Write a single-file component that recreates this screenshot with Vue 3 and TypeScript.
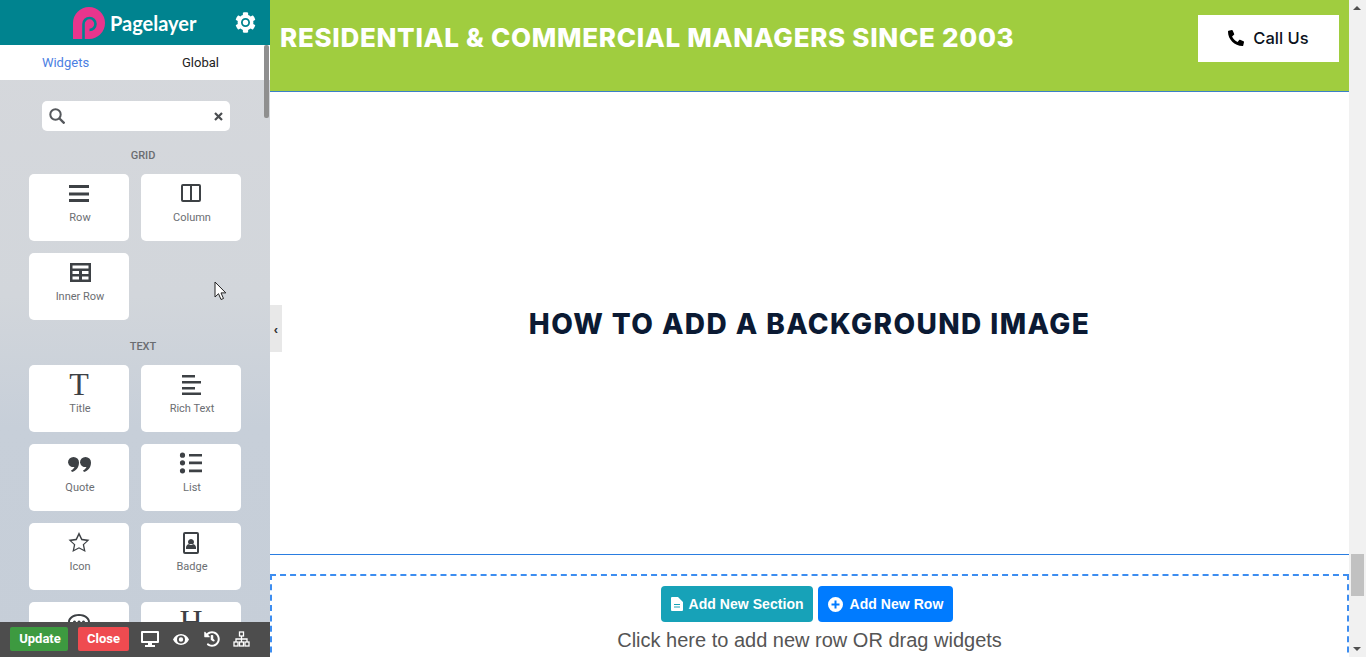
<script setup lang="ts">
interface Widget { id: string; label?: string; d?: string; glyph?: string }
interface Group { title: string; items: Widget[] }

const groups: Group[] = [
  {
    title: 'GRID',
    items: [
      { id: 'row', label: 'Row', d: 'M2 3h20v3H2z M2 10.5h20v3H2z M2 17h20v3H2z' },
      { id: 'col', label: 'Column', d: 'M4 2h16a2 2 0 0 1 2 2v14a2 2 0 0 1-2 2H4a2 2 0 0 1-2-2V4a2 2 0 0 1 2-2z M4 4v14h7V4z M13 4v14h7V4z' },
      { id: 'inner', label: 'Inner Row', d: 'M3 2h21v19H3z M5.500 4.500h16v3h-16z M5.500 10h6.500v3h-6.500z M15 10h6.500v3H15z M5.500 15.500h6.500v3h-6.500z M15 15.500h6.500v3H15z' }
    ]
  },
  {
    title: 'TEXT',
    items: [
      { id: 'title', label: 'Title', glyph: 'T' },
      { id: 'rich', label: 'Rich Text', d: 'M3 2h13v2.5H3z M3 8h19v2.5H3z M3 14h13v2.5H3z M3 19.5h19V22H3z' },
      { id: 'quote', label: 'Quote', d: 'M1 10.5a5.5 5.5 0 1 1 11 0c0 5-3 8.5-7 9.5l-1-1.5c2-1 3-2.5 3.5-3.5a5.5 5.5 0 0 1-6.5-4.5z M13 10.5a5.5 5.5 0 1 1 11 0c0 5-3 8.5-7 9.5l-1-1.5c2-1 3-2.5 3.5-3.5a5.5 5.5 0 0 1-6.5-4.5z' },
      { id: 'list', label: 'List', d: 'M3.5 0.6a2.6 2.6 0 1 1 0 5.2 2.6 2.6 0 0 1 0-5.2z M3.5 8.2a2.6 2.6 0 1 1 0 5.2 2.6 2.6 0 0 1 0-5.2z M3.5 16.2a2.6 2.6 0 1 1 0 5.2 2.6 2.6 0 0 1 0-5.2z M10 2h13v2.6H10z M10 9.6h13v2.6H10z M10 17.6h13v2.6H10z' },
      { id: 'icon', label: 'Icon', d: 'M12 1l3.2 6.8 7.3.9-5.4 5 1.5 7.3-6.6-3.6-6.6 3.6 1.5-7.3-5.4-5 7.3-.9z M12 4.4l2.3 4.9 5.3.65-3.9 3.6 1.1 5.3-4.8-2.6-4.8 2.6 1.1-5.3-3.9-3.6 5.3-.65z' },
      { id: 'badge', label: 'Badge', d: 'M6 1h12a2 2 0 0 1 2 2v18a2 2 0 0 1-2 2H6a2 2 0 0 1-2-2V3a2 2 0 0 1 2-2z M6 3v18h12V3z M12 8a3 3 0 1 0 .01 0z M7 18v-1.5c0-2 2-3.5 3-3.5h4c1 0 3 1.5 3 3.5V18z' },
      { id: 'bubble', d: 'M12 4c6 0 11 3.4 11 8s-5 8-11 8c-1.6 0-3-.2-4.4-.7L3 21l1.2-4C2.200 15.500 1 13.900 1 12c0-4.600 5-8 11-8z M12 6c-5 0-9 2.700-9 6s4 6 9 6 9-2.700 9-6-4-6-9-6z M7.500 10.500a1.500 1.500 0 1 0 .01 0z M12 10.500a1.500 1.500 0 1 0 .01 0z M16.500 10.500a1.500 1.500 0 1 0 .01 0z' },
      { id: 'heading', glyph: 'H' }
    ]
  }
]

const cog = 'M487.4 315.7l-42.6-24.6c4.3-23.2 4.3-47 0-70.2l42.6-24.6c4.900-2.800 7.100-8.600 5.500-14-11.100-35.600-30-67.800-54.700-94.600-3.800-4.100-10-5.100-14.800-2.300L380.800 110c-17.900-15.400-38.500-27.300-60.800-35.100V25.800c0-5.600-3.900-10.500-9.400-11.700-36.700-8.200-74.300-7.800-109.200 0-5.500 1.200-9.400 6.100-9.400 11.700V75c-22.200 7.900-42.800 19.800-60.800 35.100L88.700 85.500c-4.900-2.800-11-1.900-14.800 2.300-24.700 26.700-43.600 58.900-54.700 94.600-1.700 5.400.6 11.200 5.500 14L67.300 221c-4.300 23.200-4.300 47 0 70.200l-42.600 24.600c-4.900 2.800-7.100 8.600-5.500 14 11.100 35.600 30 67.800 54.700 94.600 3.800 4.100 10 5.100 14.800 2.300l42.600-24.600c17.900 15.400 38.500 27.300 60.800 35.100v49.200c0 5.600 3.900 10.500 9.400 11.700 36.700 8.200 74.300 7.800 109.200 0 5.500-1.200 9.400-6.100 9.400-11.700v-49.200c22.200-7.900 42.800-19.800 60.800-35.100l42.600 24.600c4.900 2.800 11 1.900 14.800-2.300 24.700-26.700 43.600-58.900 54.700-94.600 1.500-5.500-.7-11.300-5.600-14.100zM256 366c-60.800 0-110-49.200-110-110s49.200-110 110-110 110 49.200 110 110-49.200 110-110 110z'
const phone = 'M493.4 24.6l-104-24c-11.3-2.600-22.900 3.300-27.500 13.900l-48 112c-4.200 9.800-1.400 21.300 6.900 28l60.600 49.600c-36 76.700-98.900 140.500-177.200 177.200l-49.600-60.600c-6.800-8.300-18.200-11.100-28-6.900l-112 48C3.900 366.500-2 378.100.6 389.400l24 104C27.100 504.200 36.700 512 48 512c256.100 0 464-207.500 464-464 0-11.200-7.700-20.900-18.600-23.400z'
const history = 'M504 255.531c.253 136.64-111.18 248.372-247.82 248.468-59.015.042-113.223-20.53-155.822-54.911-11.077-8.94-11.905-25.541-1.839-35.607l11.267-11.267c8.609-8.609 22.353-9.551 31.891-1.984C173.062 425.135 212.781 440 256 440c101.705 0 184-82.311 184-184 0-101.705-82.311-184-184-184-48.814 0-93.149 18.969-126.068 49.932l50.754 50.754c10.08 10.08 2.941 27.314-11.313 27.314H24c-8.837 0-16-7.163-16-16V38.627c0-14.254 17.234-21.393 27.314-11.314l49.372 49.372C129.209 34.136 189.552 8 256 8c136.81 0 247.747 110.78 248 247.531zM323.088 334.315l16.662-21.367c6.52-8.354 5.03-20.433-3.324-26.949L296 250.562V152c0-13.255-10.745-24-24-24h-32c-13.255 0-24 10.745-24 24v128.438l65.138 50.684c8.354 6.518 20.43 5.031 26.95-3.807z'
</script>

<template>
  <div class="page">
    <aside class="sidebar">
      <header class="brand">
        <svg class="logo" viewBox="0 0 32 32" width="32" height="32">
          <path fill="#e8358d" d="M0 32V16A16 16 0 1 1 16 32h-4V32z" />
          <path fill="none" stroke="#00838f" stroke-width="2.6" d="M10.500 32V17a6 6 0 1 1 6 6" />
          <circle cx="16.500" cy="17" r="3" fill="#e8358d" />
        </svg>
        <span class="brand-name">Pagelayer</span>
        <svg class="gear" viewBox="0 0 512 512" width="21" height="21">
          <path fill="#fff" :d="cog" />
          <circle cx="256" cy="256" r="66" fill="#fff" />
        </svg>
      </header>
      <nav class="tabs">
        <span class="tab active">Widgets</span>
        <span class="tab">Global</span>
      </nav>
      <div class="search">
        <svg viewBox="0 0 16 16" width="16" height="16" class="search-icon">
          <circle cx="6.500" cy="6.500" r="5.200" fill="none" stroke="#55585c" stroke-width="2" />
          <path d="M10.500 10.500L15.500 15.500" stroke="#55585c" stroke-width="2.400" />
        </svg>
        <svg viewBox="0 0 9 9" width="9" height="9">
          <path d="M1 1L8 8M8 1L1 8" stroke="#4a4d50" stroke-width="2.200" />
        </svg>
      </div>
      <section v-for="group in groups" :key="group.title" class="group">
        <h3 class="group-title">{{ group.title }}</h3>
        <div class="cards">
          <div v-for="w in group.items" :key="w.id" class="card">
            <span v-if="w.glyph" class="glyph">{{ w.glyph }}</span>
            <svg v-else viewBox="0 0 24 24" width="24" height="24" class="card-icon">
              <path fill="#3d4145" fill-rule="evenodd" :d="w.d" />
            </svg>
            <span v-if="w.label" class="card-label">{{ w.label }}</span>
          </div>
        </div>
      </section>
      <div class="side-thumb"></div>
      <footer class="toolbar">
        <button class="tool-btn update">Update</button>
        <button class="tool-btn close">Close</button>
        <svg class="t-monitor" viewBox="0 0 18 16" width="18" height="16">
          <path fill="#fff" fill-rule="evenodd" d="M1 0h16a1 1 0 0 1 1 1v10a1 1 0 0 1-1 1h-6v2h3v2H4v-2h3v-2H1a1 1 0 0 1-1-1V1a1 1 0 0 1 1-1z M2 2v8h14V2z" />
        </svg>
        <svg class="t-eye" viewBox="0 0 16 11" width="16" height="11">
          <path fill="#fff" fill-rule="evenodd" d="M8 0c3.500 0 6.500 2.200 8 5.500C14.500 8.800 11.500 11 8 11S1.500 8.800 0 5.500C1.500 2.200 4.500 0 8 0z M8 1.500a4 4 0 1 0 0 8 4 4 0 0 0 0-8z M8 3.300a2.200 2.200 0 1 0 0 4.400 2.200 2.200 0 0 0 0-4.400z" />
        </svg>
        <svg class="t-history" viewBox="0 0 512 512" width="16" height="16">
          <path fill="#fff" :d="history" />
        </svg>
        <svg class="t-map" viewBox="0 0 17 16" width="17" height="16">
          <g fill="none" stroke="#fff" stroke-width="1.300">
            <rect x="6.500" y="1" width="4" height="4" />
            <rect x="1" y="11" width="4" height="4" />
            <rect x="6.500" y="11" width="4" height="4" />
            <rect x="12" y="11" width="4" height="4" />
            <path d="M8.500 5v6M3 11V8h11v3" />
          </g>
        </svg>
      </footer>
    </aside>

    <main class="content">
      <div class="topbar">
        <h1 class="headline">RESIDENTIAL &amp; COMMERCIAL MANAGERS SINCE 2003</h1>
        <a class="call">
          <svg viewBox="0 0 512 512" width="16" height="16" class="phone">
            <path fill="#000" transform="matrix(-1 0 0 1 512 0)" :d="phone" />
          </svg>
          Call Us
        </a>
      </div>
      <div class="hero">
        <h2 class="hero-title">HOW TO ADD A BACKGROUND IMAGE</h2>
      </div>
      <div class="spacer"></div>
      <div class="dropzone">
        <div class="actions">
          <button class="action section">
            <svg viewBox="0 0 12 14" width="12" height="14">
              <path fill="#fff" fill-rule="evenodd" d="M0 1a1 1 0 0 1 1-1h6l5 5v8a1 1 0 0 1-1 1H1a1 1 0 0 1-1-1z M3 7v1h6V7z M3 9.500v1h6v-1z" />
            </svg>
            Add New Section
          </button>
          <button class="action row">
            <svg viewBox="0 0 15 15" width="15" height="15">
              <path fill="#fff" fill-rule="evenodd" d="M7.500 0a7.500 7.500 0 1 1 0 15 7.500 7.500 0 0 1 0-15z M6.500 3.500v3h-3v2h3v3h2v-3h3v-2h-3v-3z" />
            </svg>
            Add New Row
          </button>
        </div>
        <p class="hint">Click here to add new row OR drag widgets</p>
      </div>
    </main>

    <div class="scrollbar">
      <span class="arrow up"></span>
      <span class="thumb"></span>
      <span class="arrow down"></span>
    </div>

    <div class="collapse">‹</div>
    <svg class="cursor" viewBox="0 0 13 20" width="13" height="20">
      <path fill="#fff" stroke="#222" stroke-width="1" d="M1 1v15l3.500-3.300 2.500 5.800 2.500-1-2.500-5.600h4.800z" />
    </svg>
  </div>
</template>

<style>
html, body { margin: 0; overflow: hidden; background: #fff; }
</style>

<style scoped>
.page {
  position: relative;
  display: flex;
  width: 1366px;
  height: 657px;
  overflow: hidden;
  font-family: Roboto, "Liberation Sans", sans-serif;
}
.sidebar {
  position: relative;
  flex: 0 0 270px;
  height: 657px;
  overflow: hidden;
  background: linear-gradient(180deg, #d6d8dc 0%, #d2d6db 45%, #c7cfd9 65%, #c6ced8 100%);
}
.brand {
  display: flex;
  align-items: center;
  height: 45px;
  padding-left: 73px;
  background: #00838f;
}
.brand-name {
  margin-left: 5px;
  width: 88px;
  font-family: Lato, Roboto, sans-serif;
  font-size: 20px;
  font-weight: 700;
  color: #fff;
  white-space: nowrap;
}
.gear { margin-left: 37px; }
.tabs {
  display: flex;
  height: 35px;
  background: #fff;
  font-size: 13px;
  line-height: 35px;
  color: #222;
}
.tab {
  flex: 1;
  padding-right: 4px;
  text-align: center;
}
.active { color: #4b80e2; }
.search {
  display: flex;
  align-items: center;
  justify-content: space-between;
  box-sizing: border-box;
  width: 188px;
  height: 30px;
  margin: 21px 0 0 42px;
  padding: 0 7px;
  border-radius: 5px;
  background: #fff;
}
.group-title {
  width: 286px;
  height: 20px;
  margin: 15px 0 8px;
  font-size: 11px;
  font-weight: 500;
  line-height: 20px;
  text-align: center;
  color: #6a6c70;
}
.group + .group .group-title { margin-top: 17px; }
.cards {
  display: grid;
  grid-template-columns: 100px 100px;
  gap: 12px;
  padding-left: 29px;
}
.card {
  display: flex;
  flex-direction: column;
  align-items: center;
  box-sizing: border-box;
  height: 67px;
  padding-top: 8px;
  border-radius: 5px;
  background: #fff;
}
.card-icon { display: block; }
.glyph {
  display: block;
  height: 24px;
  margin-top: -1px;
  margin-bottom: 1px;
  font-family: "Liberation Serif", serif;
  font-size: 32px;
  line-height: 24px;
  color: #3d4145;
}
.card-label {
  margin-top: 4px;
  padding-left: 2px;
  font-size: 11px;
  line-height: 16px;
  color: #6b6e72;
}
.side-thumb {
  position: absolute;
  top: 45px;
  right: 1px;
  width: 5px;
  height: 73px;
  border-radius: 2px;
  background: #8f8f8f;
}
.toolbar {
  position: absolute;
  left: 0;
  right: 0;
  bottom: 0;
  display: flex;
  align-items: center;
  box-sizing: border-box;
  height: 35px;
  padding: 0 0 1px 10px;
  background: #4d4d4d;
}
.tool-btn {
  height: 24px;
  padding: 0 0 1px;
  border: 0;
  border-radius: 2px;
  font-family: Roboto, sans-serif;
  font-size: 13px;
  font-weight: 700;
  color: #fff;
}
.update { width: 58px; padding-left: 2px; background: #3d9a40; }
.close { width: 51px; margin-left: 10px; background: #ef4b50; }
.t-monitor { margin-left: 12px; }
.t-eye { margin-left: 14px; }
.t-history { margin-left: 15px; }
.t-map { margin-left: 13px; }

.content {
  display: flex;
  flex-direction: column;
  flex: 0 0 1079px;
  height: 657px;
  overflow: hidden;
  background: #fff;
}
.topbar {
  display: flex;
  flex: none;
  align-items: flex-start;
  justify-content: space-between;
  box-sizing: border-box;
  height: 92px;
  padding: 15px 10px 0;
  background: #a0cd3f;
  border-bottom: 1px solid #3a80c8;
}
.headline {
  margin: 0;
  font-family: Inter, "Open Sans", sans-serif;
  font-size: 26px;
  font-weight: 800;
  letter-spacing: 0.7px;
  line-height: 46px;
  color: #fff;
  white-space: nowrap;
}
.call {
  display: flex;
  align-items: center;
  justify-content: center;
  gap: 9px;
  width: 141px;
  height: 45px;
  padding-bottom: 2px;
  background: #fff;
  font-family: Inter, sans-serif;
  font-size: 16.500px;
  font-weight: 500;
  color: #0b1220;
}
.hero {
  display: flex;
  flex: none;
  align-items: center;
  justify-content: center;
  height: 462px;
  border-bottom: 1px solid #2a7de1;
}
.hero-title {
  margin: 2px 0 0;
  font-family: Inter, "Open Sans", sans-serif;
  font-size: 28px;
  font-weight: 800;
  letter-spacing: 1.41px;
  color: #0b1a33;
  white-space: nowrap;
}
.spacer { flex: 0 0 19px; }
.dropzone {
  flex: 0 0 120px;
  box-sizing: border-box;
  padding-top: 10px;
  border: 2px dashed #3d8df0;
  text-align: center;
}
.actions {
  display: flex;
  justify-content: center;
  gap: 5px;
  padding-right: 6px;
}
.action {
  display: flex;
  align-items: center;
  gap: 6px;
  height: 36px;
  padding: 0 0 0 10px;
  border: 0;
  border-radius: 4px;
  font-family: "Liberation Sans", sans-serif;
  font-size: 14px;
  font-weight: 700;
  letter-spacing: 0.05px;
  color: #fff;
}
.section { width: 152px; background: #17a2b8; }
.row { width: 135px; gap: 7px; background: #007bff; }
.hint {
  margin: 6px 0 0;
  font-family: "Liberation Sans", sans-serif;
  font-size: 20px;
  line-height: 24px;
  color: #555;
}
.scrollbar {
  position: relative;
  flex: 0 0 17px;
  height: 657px;
  background: #f1f1f1;
}
.arrow {
  position: absolute;
  left: 4px;
  width: 0;
  height: 0;
  border-left: 4px solid transparent;
  border-right: 4px solid transparent;
}
.up { top: 6px; border-bottom: 4px solid #505050; }
.down { bottom: 6px; border-top: 4px solid #505050; }
.thumb {
  position: absolute;
  top: 554px;
  left: 2px;
  width: 13px;
  height: 42px;
  background: #c1c1c1;
}
.collapse {
  position: absolute;
  top: 305px;
  left: 270px;
  width: 12px;
  height: 47px;
  background: #e8e8e8;
  font-family: "Liberation Sans", sans-serif;
  font-size: 13px;
  font-weight: 700;
  line-height: 50px;
  text-align: center;
  color: #333;
}
.cursor {
  position: absolute;
  top: 281px;
  left: 214px;
}
</style>
